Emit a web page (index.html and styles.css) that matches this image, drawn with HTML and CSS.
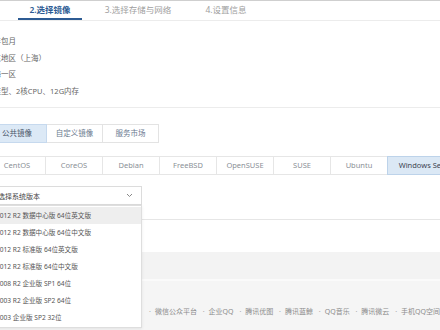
FILE: index.html
```html
<!DOCTYPE html>
<html lang="zh-CN">
<head>
<meta charset="utf-8">
<title>选择镜像</title>
<link rel="stylesheet" href="styles.css">
</head>
<body>
<div class="topline"></div>
<nav class="steps">
  <div class="step active"><span class="label">2.选择镜像</span></div>
  <div class="step"><span class="label">3.选择存储与网络</span></div>
  <div class="step"><span class="label">4.设置信息</span></div>
</nav>

<section class="info">
  <div class="row">包年包月</div>
  <div class="row">华东地区（上海）</div>
  <div class="row">上海一区</div>
  <div class="row">标准型、2核CPU、12G内存</div>
</section>

<div class="divider"></div>

<div class="imgtabs">
  <div class="imgtab selected">公共镜像</div>
  <div class="imgtab">自定义镜像</div>
  <div class="imgtab">服务市场</div>
</div>

<div class="oslist">
  <div class="os">CentOS</div>
  <div class="os">CoreOS</div>
  <div class="os">Debian</div>
  <div class="os">FreeBSD</div>
  <div class="os">OpenSUSE</div>
  <div class="os">SUSE</div>
  <div class="os">Ubuntu</div>
  <div class="os wide selected">Windows Server</div>
</div>

<div class="selectrow">
  <div class="select">
    <span class="placeholder">请选择系统版本</span>
    <svg class="chev" width="7" height="5" viewBox="0 0 7 5"><path d="M1 1 L3.5 3.5 L6 1" fill="none" stroke="#888" stroke-width="1"/></svg>
  </div>
  <ul class="dropdown">
    <li class="hover">2012 R2 数据中心版 64位英文版</li>
    <li>2012 R2 数据中心版 64位中文版</li>
    <li>2012 R2 标准版 64位英文版</li>
    <li>2012 R2 标准版 64位中文版</li>
    <li>2008 R2 企业版 SP1 64位</li>
    <li>2003 R2 企业版 SP2 64位</li>
    <li>2003 企业版 SP2 32位</li>
  </ul>
</div>

<div class="sectionline"></div>

<footer class="footer">
  <div class="footer-top"></div>
  <div class="footer-bottom">
    <span class="dot">·</span><a>微信公众平台</a>
    <span class="dot">·</span><a>企业QQ</a>
    <span class="dot">·</span><a>腾讯优图</a>
    <span class="dot">·</span><a>腾讯蓝鲸</a>
    <span class="dot">·</span><a>QQ音乐</a>
    <span class="dot">·</span><a>腾讯微云</a>
    <span class="dot">·</span><a>手机QQ空间</a>
  </div>
</footer>
</body>
</html>
```

FILE: styles.css
```css
* { box-sizing: border-box; }
html, body { margin: 0; padding: 0; }
body {
  width: 440px;
  height: 330px;
  overflow: hidden;
  background: #fff;
  font-family: "Noto Sans", "Noto Sans CJK SC", sans-serif;
  font-size: 7.5px;
  color: #666;
}

.topline { height: 1px; background: #cfcfcf; }

.steps {
  display: flex;
  height: 20px;
  padding-left: 6px;
  border-bottom: 1px solid #ececec;
}
.step {
  width: 88px;
  flex: none;
  display: flex;
  justify-content: center;
  align-items: flex-end;
  font-size: 8.5px;
  color: #a0a0a0;
}
.step .label {
  line-height: 17px;
  padding: 0 11px;
  border-bottom: 2px solid transparent;
  white-space: nowrap;
}
.step.active .label {
  color: #2d5b93;
  font-weight: 600;
  border-bottom-color: #2d5b93;
}

.info {
  padding-top: 12px;
  margin-left: -14px;
}
.info .row {
  line-height: 16.5px;
  white-space: nowrap;
  color: #666;
}

.divider {
  height: 1px;
  background: #ececec;
  margin-top: 8px;
}

.imgtabs {
  display: flex;
  margin-top: 16px;
  margin-left: -13px;
}
.imgtab {
  width: 57px;
  height: 19px;
  flex: none;
  border: 1px solid #e3e3e3;
  margin-right: -1px;
  line-height: 17px;
  text-align: center;
  color: #6b7a8f;
  white-space: nowrap;
}
.imgtab:first-child { width: 60px; }
.imgtab.selected {
  background: #dce9f6;
  border-color: #c6d9ee;
  color: #4a5566;
  position: relative;
  z-index: 1;
}

.oslist {
  display: flex;
  margin-top: 13px;
  margin-left: -12px;
}
.os {
  width: 58px;
  height: 19px;
  flex: none;
  border: 1px solid #e6e6e6;
  margin-right: -1px;
  line-height: 17px;
  text-align: center;
  color: #8a8f96;
  white-space: nowrap;
}
.os.wide { width: 80px; }
.os.selected {
  background: #dbe8f5;
  border-color: #bdd3ea;
  color: #3b4350;
  position: relative;
  z-index: 1;
}

.selectrow {
  position: relative;
  margin-top: 11px;
  margin-left: -16px;
  width: 158px;
}
.select {
  height: 19px;
  border: 1px solid #dcdcdc;
  display: flex;
  align-items: center;
  justify-content: space-between;
  padding: 0 8px 0 6px;
  font-size: 7px;
  color: #444;
  background: #fff;
}
.chev { display: block; }

.dropdown {
  position: absolute;
  top: 19px;
  left: 0;
  width: 158px;
  margin: 0;
  padding: 1px 0 1px;
  list-style: none;
  background: #fff;
  border: 1px solid #dedede;
  box-shadow: 0 1px 3px rgba(0,0,0,0.08);
  z-index: 5;
}
.dropdown li {
  height: 17px;
  line-height: 17px;
  padding-left: 11px;
  font-size: 6.6px;
  color: #555;
  white-space: nowrap;
}
.dropdown li.hover { background: #eeeeee; }

.sectionline {
  height: 1px;
  background: #e6e6e6;
  margin-top: 14px;
}

.footer { margin-top: 32px; }
.footer-top {
  height: 29px;
  background: #f3f3f3;
  border-bottom: 2px solid #fafafa;
}
.footer-bottom {
  height: 60px;
  background: #f5f5f5;
  padding: 24px 0 0 145px;
  line-height: 14px;
  font-size: 7px;
  color: #8c8c8c;
  white-space: nowrap;
}
.footer-bottom a { color: #8c8c8c; }
.footer-bottom .dot { padding: 0 4px; color: #aaa; }
```
